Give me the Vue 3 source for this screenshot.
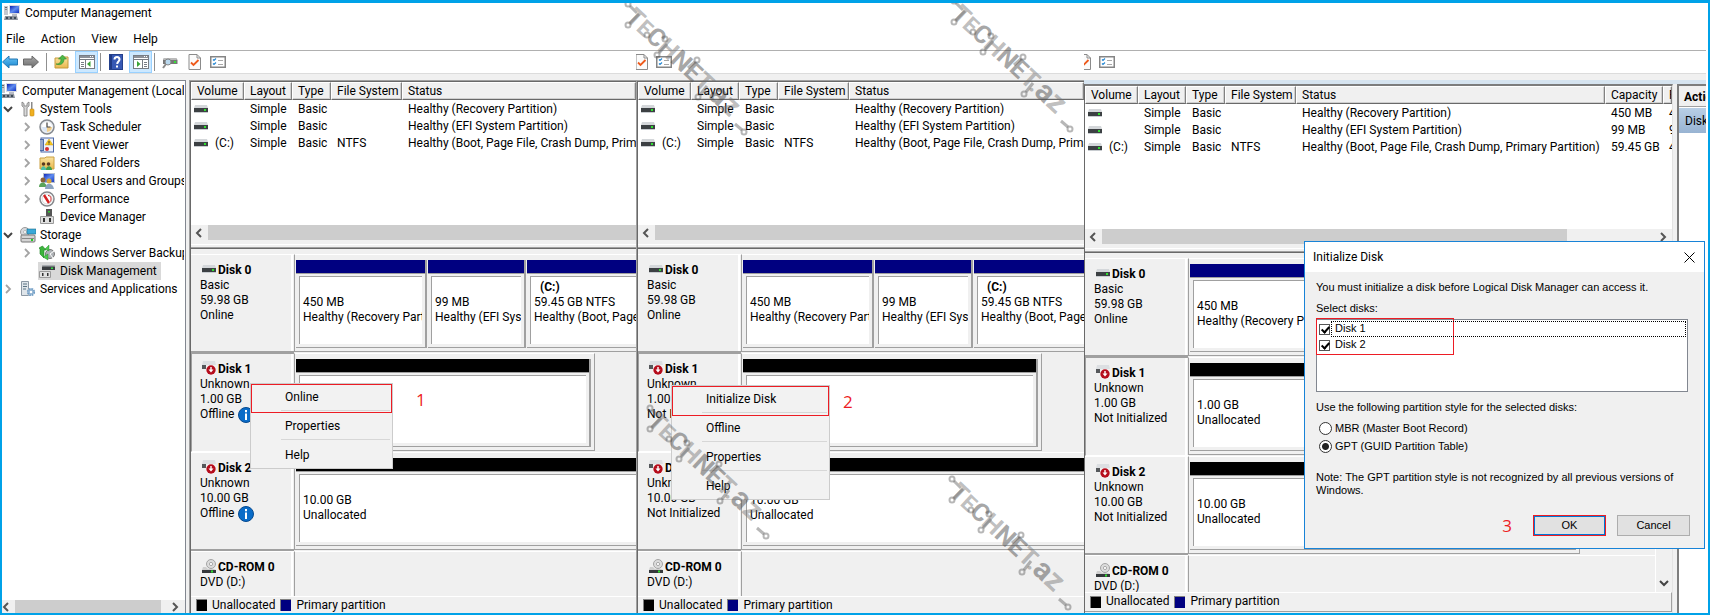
<script setup>
import { ref } from 'vue'

const menus = ['File', 'Action', 'View', 'Help']

const tree = [
  { label: 'System Tools', icon: 'tools', level: 1, chevron: 'down' },
  { label: 'Task Scheduler', icon: 'clock', level: 2, chevron: 'right' },
  { label: 'Event Viewer', icon: 'event', level: 2, chevron: 'right' },
  { label: 'Shared Folders', icon: 'shared', level: 2, chevron: 'right' },
  { label: 'Local Users and Groups', icon: 'users', level: 2, chevron: 'right' },
  { label: 'Performance', icon: 'perf', level: 2, chevron: 'right' },
  { label: 'Device Manager', icon: 'device', level: 2, chevron: '' },
  { label: 'Storage', icon: 'storage', level: 1, chevron: 'down' },
  { label: 'Windows Server Backup', icon: 'backup', level: 2, chevron: 'right' },
  { label: 'Disk Management', icon: 'diskmgmt', level: 2, chevron: '', selected: true },
  { label: 'Services and Applications', icon: 'services', level: 1, chevron: 'right' },
]

const volumes = [
  { name: '', layout: 'Simple', type: 'Basic', fs: '', status: 'Healthy (Recovery Partition)', capacity: '450 MB', free: '450 MB' },
  { name: '', layout: 'Simple', type: 'Basic', fs: '', status: 'Healthy (EFI System Partition)', capacity: '99 MB', free: '99 MB' },
  { name: '(C:)', layout: 'Simple', type: 'Basic', fs: 'NTFS', status: 'Healthy (Boot, Page File, Crash Dump, Primary Partition)', capacity: '59.45 GB', free: '47 GB' },
]

const disk0 = {
  name: 'Disk 0', icon: 'drive', kind: 'Basic', size: '59.98 GB', state: 'Online', extent: 'full',
  parts: [
    { slot: 'recovery', title: '', size: '450 MB', state: 'Healthy (Recovery Partition)' },
    { slot: 'efi', title: '', size: '99 MB', state: 'Healthy (EFI System Partition)' },
    { slot: 'rest', title: '(C:)', size: '59.45 GB NTFS', state: 'Healthy (Boot, Page File, Crash Dump, Primary Partition)' },
  ],
}
const blank = (name, size, state, extent, selected) => ({
  name, icon: 'driveoff', kind: 'Unknown', size, state, extent, selected,
  parts: [{ slot: 'rest raw', title: '', size, state: 'Unallocated' }],
})

const panels = [
  {
    id: 'one',
    disks: [disk0, blank('Disk 1', '1.00 GB', 'Offline', 'short', true), blank('Disk 2', '10.00 GB', 'Offline', 'full')],
    menu: ['Online', 'Properties', 'Help'], step: '1',
  },
  {
    id: 'two',
    disks: [disk0, blank('Disk 1', '1.00 GB', 'Not Initialized', 'short', true), blank('Disk 2', '10.00 GB', 'Not Initialized', 'full')],
    menu: ['Initialize Disk', 'Offline', 'Properties', 'Help'], step: '2',
  },
  {
    id: 'three', wide: true,
    disks: [disk0, blank('Disk 1', '1.00 GB', 'Not Initialized', 'short', true), blank('Disk 2', '10.00 GB', 'Not Initialized', 'medium')],
  },
]

const picked = ref(['Disk 1', 'Disk 2'])
const style = ref('gpt')
const marks = ['a', 'b', 'c', 'd']
</script>

<template>
  <div class="window">
    <svg class="sprites" aria-hidden="true">
      <defs>
        <linearGradient id="gBlue" x1="0" y1="0" x2="0" y2="1"><stop offset="0" stop-color="#6cc4f5" /><stop offset="1" stop-color="#1686d0" /></linearGradient>
        <linearGradient id="gGray" x1="0" y1="0" x2="0" y2="1"><stop offset="0" stop-color="#a8a8a8" /><stop offset="1" stop-color="#6c6c6c" /></linearGradient>
        <linearGradient id="gScreen" x1="0" y1="0" x2="1" y2="1"><stop offset="0" stop-color="#0a1fb0" /><stop offset="0.5" stop-color="#5f8cf0" /><stop offset="1" stop-color="#1030c0" /></linearGradient>
        <linearGradient id="gFolder" x1="0" y1="0" x2="0" y2="1"><stop offset="0" stop-color="#fbe3a0" /><stop offset="1" stop-color="#e9b84c" /></linearGradient>

        <symbol id="computer" viewBox="0 0 16 16">
          <rect x="5" y="0" width="11" height="9" fill="#d9dbe2" /><rect x="6" y="1" width="9" height="7" fill="url(#gScreen)" />
          <rect x="0" y="1" width="4" height="9" fill="#c4c8d0" /><rect x="1" y="2" width="2" height="1" fill="#666" /><rect x="1" y="4" width="2" height="1" fill="#888" />
          <path d="M8 9h5v2H8z" fill="#b8bcc6" /><path d="M1 11h12l1 4H0z" fill="#8d929c" /><path d="M2 12h2v2H2zM6 12h2v2H6zM10 12h2v2h-2z" fill="#3d4a58" />
        </symbol>
        <symbol id="back" viewBox="0 0 16 14"><path d="M.5 7L7 1v3h8.500v6H7v3z" fill="url(#gBlue)" stroke="#2478b4" /></symbol>
        <symbol id="forward" viewBox="0 0 16 14"><path d="M15.500 7L9 1v3H.5v6H9v3z" fill="url(#gGray)" stroke="#686868" /></symbol>
        <symbol id="folderup" viewBox="0 0 16 16">
          <path d="M1 4h5l1-1h7v11H1z" fill="url(#gFolder)" stroke="#c49a3c" /><path d="M2 10c4 0 5-2 5-5H4.500L8.500 1l4 4H10c0 4-3 7-8 5z" fill="#4db848" stroke="#2c8a2c" stroke-width=".6" />
        </symbol>
        <symbol id="treepane" viewBox="0 0 16 14">
          <rect x=".5" y=".5" width="15" height="13" fill="#fff" stroke="#777c84" /><path d="M1 1h14v2H1z" fill="#8b9098" /><path d="M11 1.500h1M13 1.500h1" stroke="#fff" /><path d="M1 4.500h14M6.500 5v8M2 7.500h3M2 9.500h3M2 11.500h3" stroke="#777c84" /><path d="M11.500 6v6L8 9z" fill="#3aa435" />
        </symbol>
        <symbol id="actionpane" viewBox="0 0 16 14">
          <rect x=".5" y=".5" width="15" height="13" fill="#fff" stroke="#777c84" /><path d="M1 1h14v2H1z" fill="#8b9098" /><path d="M11 1.500h1M13 1.500h1" stroke="#fff" /><path d="M1 4.500h14M9.500 5v8M11 7.500h3M11 9.500h3M11 11.500h3" stroke="#777c84" /><path d="M4 6v6l3.500-3z" fill="#3aa435" />
        </symbol>
        <symbol id="help" viewBox="0 0 14 16">
          <rect x=".5" y=".5" width="13" height="15" fill="#3759b4" stroke="#24408c" /><path d="M1 1h2v14H1z" fill="#203a84" /><path d="M5.500 5.500c0-3.500 5-3.500 5 0 0 2-2.300 2-2.300 4.500" fill="none" stroke="#fff" stroke-width="2" /><rect x="7" y="11.500" width="2" height="2" fill="#fff" />
        </symbol>
        <symbol id="inspect" viewBox="0 0 16 14">
          <path d="M2 3h12l1.500 2v4H1V5z" fill="#777" /><path d="M2 3h12l1 2H1z" fill="#bbb" /><rect x="12" y="6" width="2" height="2" fill="#38e038" /><circle cx="6" cy="7" r="3" fill="#b9d8ee" stroke="#868686" /><path d="M4 9L1 13" stroke="#8a8a8a" stroke-width="2" />
        </symbol>
        <symbol id="doccheck" viewBox="0 0 13 16">
          <path d="M.5.5h8l3.500 3.500v11.500H.5z" fill="#fbfbfb" stroke="#8b8b8b" /><path d="M8.500.5V4H12" fill="none" stroke="#8b8b8b" /><path d="M2.500 8.500L5 11l5-5" fill="none" stroke="#ee5a1c" stroke-width="1.800" />
        </symbol>
        <symbol id="checklist" viewBox="0 0 16 12">
          <rect x=".75" y=".75" width="14.500" height="10.500" fill="#fff" stroke="#858585" stroke-width="1.500" /><path d="M3 3.500l1 1 2-2M3 7.500l1 1 2-2" fill="none" stroke="#2a8ad4" stroke-width="1.200" /><path d="M8 4.500h5M8 8.500h5" stroke="#a8a8a8" />
        </symbol>

        <symbol id="tools" viewBox="0 0 16 16">
          <path d="M2 1v4l2 1.500V15h3V6.500L9 5V1L7 2.500V5H4V2.500z" fill="#dadada" stroke="#777" stroke-width=".8" /><path d="M11 1h1.500v7H11z" fill="#8a8a8a" /><rect x="10" y="8" width="4" height="7" rx="1" fill="#f0b020" stroke="#c88a10" stroke-width=".6" />
        </symbol>
        <symbol id="clock" viewBox="0 0 16 16">
          <circle cx="8" cy="8" r="7" fill="#e8ecf0" stroke="#868a90" stroke-width="1.500" /><circle cx="8" cy="8" r="5" fill="#fff" /><path d="M8 8H3a5 5 0 0 0 5 5z" fill="#d8e4f4" /><path d="M8 8h5a5 5 0 0 1-5 5z" fill="#f3cf8c" /><path d="M8 3.500V8h3.500" fill="none" stroke="#444" stroke-width="1.200" />
        </symbol>
        <symbol id="event" viewBox="0 0 16 16">
          <rect x="2" y="1" width="12.500" height="14" fill="#eef2fb" stroke="#4c68a8" /><path d="M1 2h4v12H1z" fill="#4e6ba8" /><path d="M1 4h3M1 6h3M1 8h3M1 10h3M1 12h3" stroke="#e0e4ee" /><path d="M10 2l4 6H6z" fill="#f8c81c" stroke="#c89a10" stroke-width=".5" /><path d="M10 4v2M10 6.500v1" stroke="#333" /><circle cx="8" cy="12" r="2" fill="#d83030" />
        </symbol>
        <symbol id="shared" viewBox="0 0 16 16">
          <path d="M1 3h5l1-1h8v12H1z" fill="url(#gFolder)" stroke="#caa042" /><circle cx="4.500" cy="9" r="1.800" fill="#5b3a20" /><circle cx="9.500" cy="9" r="1.800" fill="#5b3a20" /><path d="M2 15c0-5 5-5 5 0z" fill="#4cbfa8" /><path d="M7 15c0-5 6-5 6 0z" fill="#3c9c50" />
        </symbol>
        <symbol id="users" viewBox="0 0 16 16">
          <rect x="4.500" y=".5" width="11" height="9" fill="url(#gScreen)" stroke="#b8c0d0" /><circle cx="4" cy="7" r="2.500" fill="#8a6038" /><circle cx="10" cy="8" r="2.500" fill="#d8a838" /><path d="M0 14c0-6 7-6 8 0z" fill="#5aa45a" /><path d="M6 16c0-7 8-7 9 0z" fill="#8ca4c0" />
        </symbol>
        <symbol id="perf" viewBox="0 0 16 16">
          <circle cx="8" cy="8" r="7" fill="#fff" stroke="#85888c" stroke-width="1.500" /><circle cx="8" cy="8" r="5" fill="none" stroke="#ccc" stroke-width=".8" /><path d="M5 4l5 8" stroke="#d42020" stroke-width="2.400" /><path d="M9 4.500c3 0 3.500 3 2.500 6" fill="none" stroke="#d42020" />
        </symbol>
        <symbol id="device" viewBox="0 0 16 16">
          <path d="M7 0h6v7H7z" fill="#555" /><rect x="9" y="2" width="2" height="1.500" fill="#3c3" /><path d="M1.500 7.500h13v7h-13z" fill="#e0e0e0" stroke="#9a9a9a" /><path d="M4 9h2v4H4zM10 9h2v4h-2z" fill="#333" />
        </symbol>
        <symbol id="storage" viewBox="0 0 16 16">
          <circle cx="5" cy="5" r="4.500" fill="#d8dade" stroke="#999" /><circle cx="5" cy="5" r="1.500" fill="#fff" stroke="#999" stroke-width=".6" /><rect x="7" y="2" width="9" height="5" fill="#3aa8d8" stroke="#20708c" stroke-width=".6" /><rect x="1" y="8" width="14" height="7" rx="1" fill="#d4d4d4" stroke="#777" /><path d="M2 11.500h12" stroke="#888" /><rect x="11" y="12" width="2" height="2" fill="#2c2" />
        </symbol>
        <symbol id="backup" viewBox="0 0 16 16">
          <circle cx="11" cy="9" r="4.500" fill="#aeb2b6" stroke="#777" /><path d="M11 9l4-3M11 9l3 4" stroke="#fff" /><path d="M0 3l3.500-2L7 5H5v8l-4-4V4z" fill="#3cb43c" stroke="#1d8024" stroke-width=".6" /><path d="M6 4l4-4v6zM4 12l5 3V9z" fill="#4cc84c" stroke="#1d8024" stroke-width=".4" />
        </symbol>
        <symbol id="diskmgmt" viewBox="0 0 16 16">
          <path d="M4 2h11l1 2v3H3V4z" fill="#3a3d40" /><path d="M4 2h11l1 1.500H3z" fill="#a8acb0" /><rect x="12" y="4.500" width="2" height="1.500" fill="#3d4" /><path d="M.5 8.500h11v6H.5z" fill="#e0e0e0" stroke="#9a9a9a" /><path d="M3 10h1.500v3H3zM8 10h1.500v3H8z" fill="#333" />
        </symbol>
        <symbol id="services" viewBox="0 0 16 16">
          <path d="M1.500.5h7v14h-7z" fill="#dfe5ea" stroke="#8c98a4" /><path d="M3 3h4M3 5.500h4M3 8h3" stroke="#5c7484" /><circle cx="11" cy="11" r="3.200" fill="#e8f0f8" stroke="#6f9cc4" stroke-width="1.800" stroke-dasharray="1.800 .7" /><circle cx="11" cy="11" r="2" fill="#fff" stroke="#6f9cc4" />
        </symbol>

        <symbol id="drive" viewBox="0 0 14 8"><path d="M1 0h12l1 3H0z" fill="#d4d7da" /><rect y="3" width="14" height="4" fill="#3c4043" /><rect x="10" y="4" width="2" height="2" fill="#2fe02f" /><rect y="7" width="14" height="1" fill="#c8ccd0" /></symbol>
        <symbol id="driveoff" viewBox="0 0 14 14"><path d="M1 0h12l1 4H0z" fill="#dcdfe2" /><rect y="4" width="4" height="4" fill="#55585b" /><circle cx="9" cy="9" r="5" fill="#fff" /><circle cx="9" cy="9" r="4.700" fill="#b50d1c" /><path d="M8.300 6h1.400v2.600h1.800L9 11.600 6.500 8.600h1.800z" fill="#fff" /></symbol>
        <symbol id="cdrom" viewBox="0 0 14 14"><circle cx="9" cy="5" r="4.500" fill="#dcdcdc" stroke="#a4a4a4" /><circle cx="9" cy="5" r="1.600" fill="#fff" stroke="#999" stroke-width=".8" /><path d="M1 8h3l2 2h6l2 1H0z" fill="#cfcfcf" /><rect y="11" width="14" height="3" fill="#35383b" /><rect x="9" y="11.500" width="2" height="2" fill="#2fe02f" /></symbol>
        <symbol id="info" viewBox="0 0 16 16"><circle cx="8" cy="8" r="7.500" fill="#0a6cc8" stroke="#064a90" /><path d="M8 3v2.200M8 6.500V13" stroke="#fff" stroke-width="2" /></symbol>
        <symbol id="chevLeft" viewBox="0 0 8 10"><path d="M6 1L2 5l4 4" fill="none" stroke="#555" stroke-width="2" /></symbol>
        <symbol id="chevRight" viewBox="0 0 8 10"><path d="M2 1l4 4-4 4" fill="none" stroke="#555" stroke-width="2" /></symbol>
        <symbol id="chevDown" viewBox="0 0 10 8"><path d="M1 2l4 4 4-4" fill="none" stroke="#444" stroke-width="2" /></symbol>
        <symbol id="chevTree" viewBox="0 0 8 10"><path d="M2 1l4 4-4 4" fill="none" stroke="#a4a4a4" stroke-width="1.800" /></symbol>
        <symbol id="circuit" viewBox="0 0 130 140">
          <g fill="none" stroke="#4a4a4a" stroke-opacity=".4" stroke-width="2">
            <circle cx="8" cy="5" r="2.500" /><circle cx="8" cy="26" r="2.500" /><circle cx="27" cy="36" r="2.500" /><circle cx="45" cy="40" r="2.500" /><circle cx="37" cy="56" r="2.500" /><circle cx="77" cy="61" r="2.500" /><circle cx="78" cy="98" r="2.500" /><circle cx="124" cy="133" r="2.500" />
            <path d="M10 7l7 7M10 24l9-9M39 54l8-9M75 63l-7 6M80 96l7-9M122 131l-7-6" stroke-width="3" />
          </g>
        </symbol>
      </defs>
    </svg>

    <header class="titlebar"><svg class="i16"><use href="#computer" /></svg><h1>Computer Management</h1></header>
    <nav class="menubar"><button v-for="m in menus" :key="m" type="button">{{ m }}</button></nav>

    <div class="toolbar">
      <div class="tools main">
        <button type="button" class="tool" aria-label="Back"><svg class="i16"><use href="#back" /></svg></button>
        <button type="button" class="tool" aria-label="Forward"><svg class="i16"><use href="#forward" /></svg></button>
        <i class="sep"></i>
        <button type="button" class="tool" aria-label="Up one level"><svg class="i16"><use href="#folderup" /></svg></button>
        <button type="button" class="tool on" aria-label="Console tree"><svg class="i16"><use href="#treepane" /></svg></button>
        <i class="sep"></i>
        <button type="button" class="tool" aria-label="Help"><svg class="i16"><use href="#help" /></svg></button>
        <button type="button" class="tool on" aria-label="Action pane"><svg class="i16"><use href="#actionpane" /></svg></button>
        <i class="sep"></i>
        <button type="button" class="tool" aria-label="Rescan"><svg class="i16"><use href="#inspect" /></svg></button>
        <button type="button" class="tool" aria-label="Properties"><svg class="i16"><use href="#doccheck" /></svg></button>
        <button type="button" class="tool" aria-label="Settings"><svg class="i16"><use href="#checklist" /></svg></button>
      </div>
      <div v-for="n in 2" :key="n" class="tools" :class="'cut' + n">
        <button type="button" class="tool clip" aria-label="Properties"><svg class="i16"><use href="#doccheck" /></svg></button>
        <button type="button" class="tool" aria-label="Settings"><svg class="i16"><use href="#checklist" /></svg></button>
      </div>
    </div>

    <main class="workspace">
      <aside class="tree">
        <ul>
          <li class="root"><svg class="i16"><use href="#computer" /></svg><span>Computer Management (Local</span></li>
          <li v-for="t in tree" :key="t.label" :class="['level' + t.level, { selected: t.selected }]">
            <i class="twist">
              <svg v-if="t.chevron === 'right'" class="cr"><use href="#chevTree" /></svg>
              <svg v-else-if="t.chevron === 'down'" class="cd"><use href="#chevDown" /></svg>
            </i>
            <span class="node"><svg class="i16"><use :href="'#' + t.icon" /></svg><span>{{ t.label }}</span></span>
          </li>
        </ul>
        <div class="hbar tree-bar"><svg class="cr"><use href="#chevLeft" /></svg><i class="thumb"></i><svg class="cr"><use href="#chevRight" /></svg></div>
      </aside>

      <section v-for="p in panels" :key="p.id" class="panel" :class="'p-' + p.id">
        <div class="frame">
          <div class="volumes">
            <table>
              <colgroup>
                <col class="c-vol" /><col class="c-lay" /><col class="c-typ" /><col class="c-fs" /><col />
                <template v-if="p.wide"><col class="c-cap" /><col class="c-free" /></template>
              </colgroup>
              <thead>
                <tr>
                  <th>Volume</th><th>Layout</th><th>Type</th><th>File System</th><th>Status</th>
                  <template v-if="p.wide"><th>Capacity</th><th>Free</th></template>
                </tr>
              </thead>
              <tbody>
                <tr v-for="v in volumes" :key="v.status">
                  <td class="vol"><svg class="drv"><use href="#drive" /></svg>{{ v.name }}</td>
                  <td>{{ v.layout }}</td><td>{{ v.type }}</td><td>{{ v.fs }}</td><td>{{ v.status }}</td>
                  <template v-if="p.wide"><td>{{ v.capacity }}</td><td>{{ v.free }}</td></template>
                </tr>
              </tbody>
            </table>
          </div>
          <div class="hbar"><svg class="cr"><use href="#chevLeft" /></svg><i class="thumb"></i><svg v-if="p.wide" class="cr"><use href="#chevRight" /></svg></div>
          <div class="splitter"></div>
          <div class="lower">
            <div class="disks">
              <div v-for="d in p.disks" :key="d.name" class="disk">
                <div class="label" :class="{ sunken: d.selected }">
                  <strong><svg class="dicon"><use :href="'#' + d.icon" /></svg>{{ d.name }}</strong>
                  <p>{{ d.kind }}</p>
                  <p>{{ d.size }}</p>
                  <p class="state">{{ d.state }}<svg v-if="d.state === 'Offline'" class="i16"><use href="#info" /></svg></p>
                </div>
                <div class="map" :class="d.extent">
                  <div v-for="(q, k) in d.parts" :key="k" class="part" :class="q.slot">
                    <div class="strip"></div>
                    <div class="box"><b>{{ q.title }}</b><p>{{ q.size }}</p><p>{{ q.state }}</p></div>
                  </div>
                </div>
              </div>
              <div class="disk cd-row">
                <div class="label"><strong><svg class="dicon"><use href="#cdrom" /></svg>CD-ROM 0</strong><p>DVD (D:)</p></div>
                <div class="map none"></div>
              </div>
            </div>
            <div v-if="p.wide" class="vbar"><svg class="cd"><use href="#chevDown" /></svg></div>
          </div>
          <footer class="legend"><i class="sw black"></i>Unallocated<i class="sw navy"></i>Primary partition</footer>
        </div>
        <div v-if="p.wide" class="actions"><h2>Actions</h2><p>Disk Management</p></div>

        <template v-if="p.menu">
          <div class="context" role="menu">
            <button v-for="m in p.menu" :key="m" type="button" role="menuitem">{{ m }}</button>
          </div>
          <span class="step">{{ p.step }}</span>
        </template>
      </section>
    </main>

    <div class="dialog" role="dialog" aria-labelledby="dlg-title">
      <div class="dlg-head"><h2 id="dlg-title">Initialize Disk</h2><button type="button" aria-label="Close"><svg viewBox="0 0 11 11"><path d="M.5.5l10 10M10.500.5l-10 10" stroke="#000" fill="none" /></svg></button></div>
      <form class="dlg-body" @submit.prevent>
        <p class="lead">You must initialize a disk before Logical Disk Manager can access it.</p>
        <p class="cap">Select disks:</p>
        <div class="list">
          <div class="marked"></div>
          <label v-for="n in ['Disk 1', 'Disk 2']" :key="n"><input v-model="picked" type="checkbox" :value="n" /><span>{{ n }}</span></label>
        </div>
        <p class="use">Use the following partition style for the selected disks:</p>
        <label class="radio"><input v-model="style" type="radio" name="style" value="mbr" />MBR (Master Boot Record)</label>
        <label class="radio"><input v-model="style" type="radio" name="style" value="gpt" />GPT (GUID Partition Table)</label>
        <p class="note">Note: The GPT partition style is not recognized by all previous versions of Windows.</p>
        <div class="buttons"><span class="step-3">3</span><button type="submit" class="ok">OK</button><button type="button">Cancel</button></div>
      </form>
    </div>

    <svg v-for="m in marks" :key="m" class="mark" :class="'mark-' + m" viewBox="0 0 130 140">
      <use href="#circuit" />
      <text transform="translate(4 20) rotate(43)"><tspan class="lite">T</tspan><tspan class="lite sm">E</tspan><tspan>C</tspan><tspan class="lite">H</tspan><tspan>NE</tspan><tspan class="lite">T.</tspan><tspan class="low">a</tspan><tspan class="lite low">z</tspan></text>
    </svg>
  </div>
</template>

<style>
body { margin: 0; background: #fff; }
</style>

<style scoped>
.window {
  position: relative; box-sizing: border-box; min-height: 100vh; display: flex; flex-direction: column; overflow: hidden;
  border: 2px solid #00a2e8; border-top-width: 3px; background: #fff; color: #000;
  font: 12px/15px Roboto, "Open Sans", sans-serif;
}
.window * { box-sizing: border-box; }
.sprites { position: absolute; width: 0; height: 0; }
h1, h2, p, ul { margin: 0; padding: 0; font-size: inherit; font-weight: normal; }
button { font: inherit; color: inherit; border: 0; background: none; padding: 0; }
svg { flex: none; display: block; }
.i16 { width: 16px; height: 16px; }
.cr { width: 8px; height: 10px; }
.cd { width: 10px; height: 8px; }

.titlebar { display: flex; align-items: center; gap: 5px; height: 20px; padding-left: 2px; }
.menubar { display: flex; gap: 16px; height: 27px; padding: 5px 0 0 4px; align-items: flex-start; }
.menubar button { line-height: 22px; }
.toolbar {
  display: grid; grid-template-columns: 634fr 448fr 622fr; height: 24px; margin-right: 2px;
  border-top: 1px solid #b0b0b0; border-bottom: 1px solid #dcdcdc;
}
.tools { display: flex; align-items: center; overflow: hidden; }
.tool { flex: none; width: 23px; height: 22px; display: grid; place-items: center; }
.tools > .tool:first-child { width: 15px; }
.tool.on { background: #cce8ff; border: 1px solid #99d1ff; }
.sep { width: 1px; height: 18px; background: #909090; margin: 0 3px 0 4px; }
.tool + .tool { margin-left: 2px; }
.main .tool:last-child { margin-left: 0; }
.tool.on + .sep { margin-left: 2px; }
.tools .clip { overflow: hidden; justify-content: end; }
.tools.cut1 > .clip { width: 14px; }
.tools.cut2 > .clip { width: 9px; }

.workspace { flex: 1; display: grid; grid-template-columns: 187px 447fr 448fr 622fr; margin-right: 2px; padding-top: 6px; background: #f0f0f0; }
.tree { display: flex; flex-direction: column; min-width: 0; margin-right: 3px; border-top: 1px solid #828790; border-right: 1px solid #828790; background: #fff; overflow: hidden; }
.tree ul { list-style: none; flex: 1; padding-top: 1px; margin-right: 1px; overflow: hidden; }
.tree li { display: flex; align-items: center; height: 18px; white-space: nowrap; }
.root { gap: 5px; margin-left: -1px; }
.twist { width: 12px; margin-right: 5px; display: grid; place-items: center; flex: none; }
.level2 { padding-left: 19px; }
.node { display: flex; align-items: center; gap: 5px; height: 18px; padding: 0 4px 0 1px; }
.level1 .node { gap: 4px; }
.selected .node { background: #d9d9d9; }

.hbar { display: flex; align-items: center; height: 15px; background: #f0f0f0; flex: none; padding-left: 4px; }
.thumb { display: block; align-self: stretch; flex: 1; margin-left: 5px; background: #cdcdcd; }
.tree-bar { height: 13px; padding: 0 6px 0 0; }
.tree-bar .thumb { margin: 0 10px 0 5px; }
.p-three .thumb { margin-right: 92px; }
.p-three .hbar { padding-right: 5px; }

.panel { position: relative; min-width: 0; display: flex; border-left: 1px solid #a0a0a0; border-top: 1px solid #a0a0a0; }
.frame { flex: 1; min-width: 0; display: flex; flex-direction: column; border-left: 1px solid #696969; border-top: 1px solid #696969; }
.volumes { height: 143px; background: #fff; overflow: hidden; }
table { width: 100%; table-layout: fixed; border-collapse: separate; border-spacing: 0; }
.c-vol { width: 53px; } .c-lay { width: 48px; } .c-typ { width: 39px; } .c-fs { width: 71px; } .c-cap { width: 58px; } .c-free { width: 9px; }
th, td { padding: 2px 0 0 5px; text-align: left; white-space: nowrap; overflow: hidden; font-weight: normal; height: 17px; }
th { height: 18px; padding-top: 1px; background: #f0f0f0; border: 1px solid #fff; border-right-color: #828282; border-bottom-color: #696969; box-shadow: inset -1px -1px 0 #cfcfcf; }
td { padding-left: 6px; }
.vol .drv { display: inline-block; width: 14px; height: 8px; margin: 0 7px 2px -3px; vertical-align: middle; }

.splitter { flex: none; height: 9px; border-bottom: 1px solid #696969; background: linear-gradient(#f0f0f0 4px, #fff 4px 5px, #f0f0f0 5px 7px, #a0a0a0 7px); }
.lower { flex: 1; display: flex; padding-top: 5px; }
.disks { flex: 1; min-width: 0; display: flex; flex-direction: column; }
.disk { display: flex; flex: none; height: 99px; overflow: hidden; }
.label { flex: none; width: 103px; padding: 8px 0 0 9px; border-top: 1px solid #fff; border-bottom: 2px solid #a0a0a0; box-shadow: inset -1px 0 0 #f0f0f0, inset -3px 0 0 #fff; white-space: nowrap; }
.label.sunken { padding-left: 8px; border-left: 1px solid #a0a0a0; border-top-color: #a0a0a0; border-bottom: 1px solid #fff; }
.label strong { display: flex; align-items: center; gap: 2px; height: 15px; padding-left: 2px; font-weight: 700; }
.dicon { width: 14px; height: 14px; margin-top: -4px; }
.state { display: flex; align-items: center; gap: 4px; height: 15px; }
.map { flex: 1; min-width: 0; display: flex; gap: 1px; padding: 5px 0 3px 1px; border-left: 1px solid #a0a0a0; border-top: 1px solid #fff; border-bottom: 1px solid #a0a0a0; margin-bottom: 1px; }
.map.short { flex: 0 0 301px; border-right: 1px solid #a0a0a0; padding-right: 3px; }
.map.medium { flex: 0 1 392px; border-right: 1px solid #a0a0a0; padding-right: 3px; }
.part { display: flex; flex-direction: column; min-width: 0; border-right: 2px solid #a0a0a0; border-bottom: 1px solid #a0a0a0; }
.part.recovery { flex: none; width: 131px; }
.part.efi { flex: none; width: 98px; }
.part.rest { flex: 1; }
.full .part.rest { border-right: 0; }
.strip { height: 14px; flex: none; background: #000080; border-bottom: 1px solid #a0a0a0; }
.raw .strip { background: #000; }
.box { flex: 1; margin: 2px 3px 3px 3px; padding: 3px 0 0 3px; background: #fff; border-left: 1px solid #a0a0a0; border-top: 1px solid #a0a0a0; overflow: hidden; white-space: nowrap; }
.full .rest .box { margin-right: 0; }
.box b { display: block; height: 15px; padding-left: 6px; font-weight: 700; }
.cd-row { flex: 1 0 36px; height: 36px; }
.cd-row .label { border-bottom: 0; }
.map.none { border-bottom: 0; margin: 0; padding: 0; }
.legend { display: flex; align-items: center; flex: none; height: 17px; padding-left: 5px; border-top: 1px solid #fff; }
.sw { width: 11px; height: 12px; margin-right: 5px; border: 1px solid #808080; border-width: 1px 0 0 1px; }
.sw.black { background: #000; }
.sw.navy { background: #000080; margin-left: 5px; }

.p-three { border: 0; padding-top: 4px; background: #d6e4f0; }
.p-three .frame { border-top: 2px solid #7d7d7d; background: #f0f0f0; border-right: 1px solid #e3e3e3; }
.p-three .legend { height: 20px; margin-bottom: 1px; padding-bottom: 1px; border-right: 1px solid #a0a0a0; border-bottom: 1px solid #a0a0a0; }
.vbar { flex: none; width: 17px; display: flex; align-items: flex-end; justify-content: center; padding-bottom: 5px; border-left: 1px solid #fff; }
.actions { flex: none; width: 33px; border-left: 4px solid #f0f0f0; background: #fff; overflow: hidden; white-space: nowrap; box-shadow: inset 2px 2px 0 #7d7d7d; }
.actions h2 { margin: 2px 0 0 2px; height: 21px; padding-left: 5px; line-height: 22px; font-weight: 700; background: #f0f0f0; border-bottom: 1px solid #a0a0a0; }
.actions p { margin: 1px 0 0 2px; height: 25px; line-height: 27px; padding-left: 6px; background: linear-gradient(#b8cfe6, #98b3d2); }

.context { position: absolute; left: 60px; top: 302px; width: 143px; display: flex; flex-direction: column; gap: 7px; padding: 2px; background: #f2f2f2; border: 1px solid #ccc; }
.context button { position: relative; height: 22px; padding-left: 32px; text-align: left; line-height: 20px; }
.context button + button::before { content: ""; position: absolute; left: 28px; right: 0; top: -5px; border-top: 1px solid #d7d7d7; }
.context::after { content: ""; position: absolute; left: 0; right: 0; top: 0; height: 27px; border: 1px solid #ed1c24; }
.p-two .context { left: 34px; top: 304px; width: 159px; }
.p-two .context::after { height: 28px; }
.step { position: absolute; left: 226px; top: 307px; color: #ed1c24; font: 17px/24px "Open Sans", sans-serif; }
.p-two .step { left: 206px; top: 309px; }

.dialog { position: absolute; right: 3px; top: 238px; width: 401px; background: #f0f0f0; border: 1px solid #1883d7; }
.dlg-head { display: flex; justify-content: space-between; align-items: center; height: 30px; padding: 0 9px 0 8px; background: #fff; }
.dlg-head svg { width: 11px; height: 11px; }
.dlg-body { display: flex; flex-direction: column; padding: 9px 14px 12px 11px; font: 11px/13px "Liberation Sans", Arial, sans-serif; }
.cap { margin-top: 8px; }
.list { position: relative; margin: 4px 2px 0 0; height: 73px; padding: 1px; background: #fff; border: 1px solid #828790; }
.marked { position: absolute; left: -1px; top: -2px; width: 138px; height: 37px; border: 1px solid #ed1c24; }
.list label { position: relative; display: flex; align-items: center; height: 16px; padding-left: 1px; }
.list label span { flex: 1; height: 16px; padding: 0 0 0 3px; border: 1px solid transparent; line-height: 13px; }
.list label:nth-of-type(1) span { border: 1px dotted #000; }
.list input { appearance: none; flex: none; margin: 0 1px 0 0; width: 11px; height: 11px; border: 1px solid #555; background: #fff; }
.list input:checked::after { content: ""; display: block; width: 3px; height: 6px; margin: 0 0 0 3px; border: solid #000; border-width: 0 2px 2px 0; transform: rotate(42deg); }
.use { margin: 9px 0 5px; }
.radio { display: flex; align-items: center; height: 18px; padding-left: 3px; gap: 3px; }
.radio input { appearance: none; flex: none; width: 13px; height: 13px; margin: 0; border: 1px solid #333; border-radius: 50%; background: #fff; }
.radio input:checked { background: radial-gradient(circle, #222 0 3px, #fff 4px); }
.note { margin-top: 16px; }
.buttons { display: flex; justify-content: flex-end; align-items: center; gap: 11px; margin-top: 18px; }
.buttons button { width: 73px; height: 21px; background: #e1e1e1; border: 1px solid #adadad; }
.buttons .ok { border: 1px solid #ed1c24; box-shadow: inset 1px 1px 0 #0078d7, inset -1px -1px 0 #0078d7; }
.step-3 { margin-right: 10px; color: #ed1c24; font: 17px/20px "Open Sans", sans-serif; }

.mark { position: absolute; left: 618px; top: -4px; width: 130px; height: 140px; pointer-events: none; overflow: visible; }
.mark text { font: 700 25px "Roboto", sans-serif; fill: #505050; fill-opacity: .5; }
.mark .lite { fill: #707070; fill-opacity: .45; }
.mark .sm { font-size: 22px; }
.mark .low { font-size: 30px; }
.mark-b { left: 944px; top: -7px; }
.mark-c { left: 640px; top: 400px; }
.mark-d { left: 942px; top: 471px; }
</style>
